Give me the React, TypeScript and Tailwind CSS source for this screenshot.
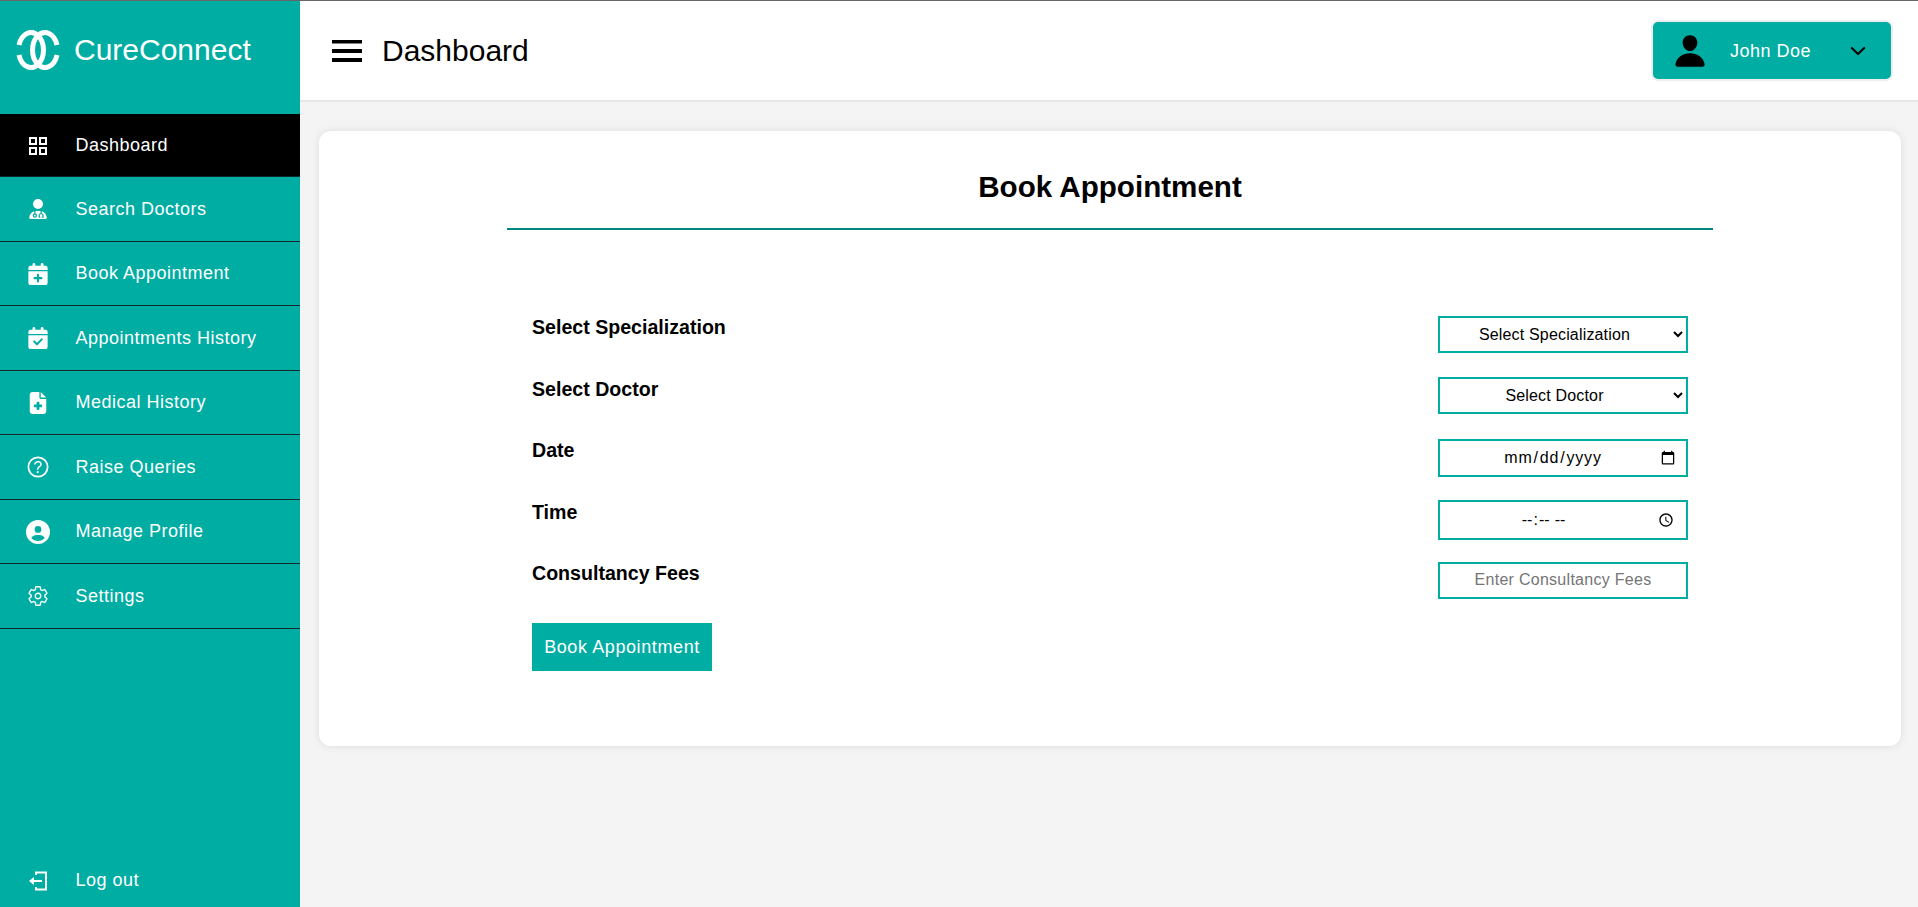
import { FaCalendarCheck, FaCalendarPlus, FaFileMedical, FaUserDoctor, FaCircleUser } from 'react-icons/fa6'
import { IoPerson, IoSettingsOutline, IoHelpCircleOutline, IoChevronDown } from 'react-icons/io5'

function GridIcon() {
  return (
    <svg width="18" height="18" viewBox="0 0 18 18" fill="none" stroke="white" strokeWidth="2">
      <rect x="1" y="1" width="6" height="6" />
      <rect x="11" y="1" width="6" height="6" />
      <rect x="1" y="11" width="6" height="6" />
      <rect x="11" y="11" width="6" height="6" />
    </svg>
  )
}

const menu = [
  { label: 'Dashboard', icon: <GridIcon />, active: true },
  { label: 'Search Doctors', icon: <FaUserDoctor className="text-[20px]" /> },
  { label: 'Book Appointment', icon: <FaCalendarPlus className="text-[22px]" /> },
  { label: 'Appointments History', icon: <FaCalendarCheck className="text-[22px]" /> },
  { label: 'Medical History', icon: <FaFileMedical className="text-[22px]" /> },
  { label: 'Raise Queries', icon: <IoHelpCircleOutline className="text-[28px]" /> },
  { label: 'Manage Profile', icon: <FaCircleUser className="text-[24px]" /> },
  { label: 'Settings', icon: <IoSettingsOutline className="text-[22px]" /> },
]

const fieldClass =
  'w-[250px] border-2 border-[#00ada3] bg-white text-center text-base text-black outline-none'
const dateTimeClass =
  '[&::-webkit-datetime-edit]:justify-center [&::-webkit-date-and-time-value]:text-center'

function Logo() {
  return (
    <svg width="44" height="40" viewBox="0 0 44 40" fill="none" stroke="white" strokeWidth="5">
      <path d="M3 15 A 12.5 17.5 0 1 1 3 25" />
      <path d="M41 15 A 12.5 17.5 0 1 0 41 25" />
    </svg>
  )
}

export default function App() {
  return (
    <div className="flex h-[907px] overflow-hidden border-t border-[#666] bg-[#f4f4f4] font-['Liberation_Sans',Arial,sans-serif]">
      {/* Sidebar */}
      <aside className="flex w-[300px] shrink-0 flex-col bg-[#00ada3] text-white">
        <div className="flex h-[113px] shrink-0 items-start pl-[16px] pt-[29px]">
          <Logo />
          <span className="ml-[14px] text-[30px] leading-[40px]">CureConnect</span>
        </div>
        <nav>
          {menu.map((item) => (
            <a
              key={item.label}
              href="#"
              className={`flex h-[64.5px] items-center border-b border-[#0b2b2a] pt-[1px] text-[18px] tracking-[0.5px] first:h-[63px] ${item.active ? 'bg-black' : ''}`}
            >
              <span className="flex w-[75.5px] justify-center">{item.icon}</span>
              {item.label}
            </a>
          ))}
        </nav>
        <a href="#" className="mt-auto flex h-[53px] items-center text-[18px] tracking-[0.5px]">
          <span className="flex w-[75.5px] justify-center">
            <svg width="20" height="20" viewBox="0 0 20 20" fill="none" stroke="white" strokeWidth="2">
              <path d="M8 4 V1.5 H18 V18.5 H8 V16" />
              <path d="M14 10 H4" />
              <path d="M1 10 L6 6 V14 Z" fill="white" stroke="none" />
            </svg>
          </span>
          Log out
        </a>
      </aside>

      <div className="flex min-w-0 flex-1 flex-col">
        {/* Top bar */}
        <header className="flex h-[101px] shrink-0 items-center justify-between border-b-2 border-[#e6e6e6] bg-white pl-[32px] pr-[25px]">
          <div className="flex items-center">
            <svg width="30" height="22" viewBox="0 0 30 22" fill="black">
              <rect width="30" height="3.5" />
              <rect y="9" width="30" height="4" />
              <rect y="18" width="30" height="4" />
            </svg>
            <h1 className="ml-[20px] text-[30px] text-black">Dashboard</h1>
          </div>
          <button className="flex h-[61px] w-[242px] items-center rounded-[7px] border-2 border-[#eeeeee] bg-[#00ada3] pl-[19px] text-[18px] tracking-[0.5px] text-white">
            <IoPerson className="text-[36px] text-black" />
            <span className="ml-[22px] pt-[1px]">John Doe</span>
            <IoChevronDown className="ml-[36px] text-[22px] text-black" />
          </button>
        </header>

        {/* Content */}
        <main className="pl-[19px] pr-[17px] pt-[29px]">
          <section className="flex h-[615px] flex-col items-center rounded-xl bg-white shadow-[0_0_8px_rgba(0,0,0,0.1)]">
            <h2 className="mt-[39px] w-[1206px] border-b-2 border-[#00877f] pb-[24px] text-center text-[29.6px] font-bold leading-[34px] text-black">
              Book Appointment
            </h2>
            <form className="mt-[85.5px] w-[1206px] px-[25px]">
              <div className="flex h-[61.5px] items-start justify-between">
                <label className="mt-[-2.5px] text-[19.6px] font-bold text-black">Select Specialization</label>
                <select className={`${fieldClass} h-[37px] pr-[5px] tracking-[0.17px]`}>
                  <option>Select Specialization</option>
                </select>
              </div>
              <div className="flex h-[61.5px] items-start justify-between">
                <label className="mt-[-2.5px] text-[19.6px] font-bold text-black">Select Doctor</label>
                <select className={`${fieldClass} h-[37px] pr-[5px] tracking-[0.17px]`}>
                  <option>Select Doctor</option>
                </select>
              </div>
              <div className="flex h-[61.5px] items-start justify-between">
                <label className="mt-[-2.5px] text-[19.6px] font-bold text-black">Date</label>
                <input type="date" className={`${fieldClass} ${dateTimeClass} h-[38px] px-2 tracking-[0.8px]`} />
              </div>
              <div className="flex h-[61.5px] items-start justify-between">
                <label className="mt-[-2.5px] text-[19.6px] font-bold text-black">Time</label>
                <input type="time" className={`${fieldClass} ${dateTimeClass} h-[40px] px-2 tracking-[2.2px] [&::-webkit-datetime-edit]:pr-[8px]`} />
              </div>
              <div className="flex h-[61.5px] items-start justify-between">
                <label className="mt-[-2.5px] text-[19.6px] font-bold text-black">Consultancy Fees</label>
                <input
                  type="text"
                  placeholder="Enter Consultancy Fees"
                  className={`${fieldClass} h-[37px] px-2 tracking-[0.28px] placeholder:text-[#757575]`}
                />
              </div>
              <button
                type="button"
                className="h-[48px] w-[180px] bg-[#00ada3] text-[18px] tracking-[0.6px] text-white"
              >
                Book Appointment
              </button>
            </form>
          </section>
        </main>
      </div>
    </div>
  )
}
